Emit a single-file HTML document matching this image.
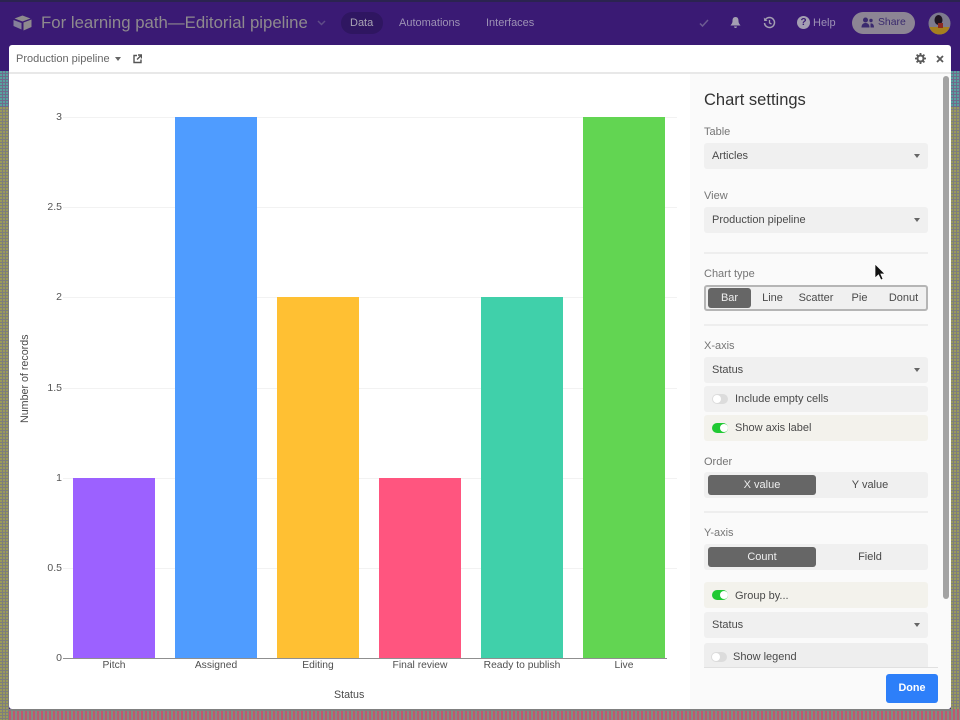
<!DOCTYPE html>
<html><head><meta charset="utf-8">
<style>
html,body{margin:0;padding:0;width:960px;height:720px;overflow:hidden;background:#3a1a74}
body{position:relative;font-family:"Liberation Sans",sans-serif;color:#4a4a4a}
.a{position:absolute}
.t{position:absolute;white-space:nowrap;line-height:14px}
.dith{background-color:#7d7d7d;background-image:radial-gradient(circle at 1px 1px,#a3a34e 0.9px,transparent 1px);background-size:3px 3px}
.box{position:absolute;left:704px;width:224px;height:26px;background:#f0f0f0;border-radius:3px}
.lab{position:absolute;left:704px;font-size:11px;color:#757575;line-height:14px;white-space:nowrap}
.val{position:absolute;left:8px;top:6px;font-size:11px;color:#4a4a4a;line-height:14px;white-space:nowrap}
.car{position:absolute;left:210px;top:11px;width:0;height:0;border-left:3px solid transparent;border-right:3px solid transparent;border-top:4px solid #666}
.sep{position:absolute;left:704px;width:224px;height:2px;background:#eeeeee}
.sw{position:absolute;left:8px;top:8px;width:16px;height:10px;border-radius:5px;background:#dcdcdc}
.sw i{position:absolute;left:1px;top:1px;width:8px;height:8px;border-radius:50%;background:#fff}
.sw.on{background:#20c933}.sw.on i{left:8px}
.sel{position:absolute;background:#666;border-radius:3px;color:#eee;font-size:11px;text-align:center;height:20px;line-height:20px;top:3px}
.opt{position:absolute;font-size:11px;color:#4a4a4a;text-align:center;line-height:20px;height:20px;top:3px}
.y{position:absolute;font-size:10.5px;color:#555;right:898px;line-height:12px}
.g{position:absolute;left:63px;width:614px;height:1px;background:#f2f2f2}
.x{position:absolute;top:659px;font-size:10.3px;color:#4f4f4f;text-align:center;line-height:14px;white-space:nowrap}
.b{position:absolute;width:82px}
.h{position:absolute;font-size:11px;color:#9d92b5;line-height:14px;white-space:nowrap}
</style></head><body>

<!-- header -->
<div class="a" style="left:0;top:0;width:960px;height:2px;background:#2b2350"></div>
<svg class="a" style="left:13px;top:15px" width="19" height="16" viewBox="0 0 19 16"><path d="M9.500 0.500L17.500 3.500L9.500 6.500L1.500 3.500Z" fill="#8e8a8e"/><path d="M10.500 7.500L18.500 4.500V12L10.500 15.500Z" fill="#8e8a8e"/><path d="M0.500 5L8.500 8V14.500L0.500 11Z" fill="#85809a"/></svg>
<div class="t" style="left:41px;top:13px;font-size:16.8px;line-height:20px;color:#8e8a8e">For learning path—Editorial pipeline</div>
<svg class="a" style="left:317px;top:20px" width="9" height="6" viewBox="0 0 9 6"><path d="M1 1L4.500 4.500L8 1" fill="none" stroke="#5f4c87" stroke-width="1.500"/></svg>
<div class="a" style="left:341px;top:12px;width:42px;height:22px;border-radius:11px;background:#2f1661"></div>
<div class="h" style="left:350px;top:16px;color:#a8a4b4">Data</div>
<div class="h" style="left:399px;top:16px">Automations</div>
<div class="h" style="left:486px;top:16px">Interfaces</div>
<svg class="a" style="left:699px;top:18px" width="10" height="10" viewBox="0 0 10 10"><path d="M1 5.500L3.500 8L9 2" fill="none" stroke="#6d5c92" stroke-width="1.500"/></svg>
<svg class="a" style="left:729px;top:16px" width="13" height="13" viewBox="0 0 13 13"><path d="M6.500 1C4 1 3.500 3 3.500 5C3.500 7.500 2 8.500 1.500 9.500H11.500C11 8.500 9.500 7.500 9.500 5C9.500 3 9 1 6.500 1ZM5 10.500H8C8 12.500 5 12.500 5 10.500Z" fill="#a49fb2"/></svg>
<svg class="a" style="left:763px;top:16px" width="13" height="13" viewBox="0 0 13 13"><path d="M2.500 3.500A5 5 0 1 1 1.500 7" fill="none" stroke="#a49fb2" stroke-width="1.500"/><path d="M0.800 1.500L1.200 5H4.500Z" fill="#a49fb2"/><path d="M6.500 4V7L8.500 8" fill="none" stroke="#a49fb2" stroke-width="1.300"/></svg>
<div class="a" style="left:797px;top:16px;width:13px;height:13px;border-radius:50%;background:#a49fb2;color:#3a1a74;font-size:10px;font-weight:bold;line-height:13px;text-align:center">?</div>
<div class="h" style="left:813px;top:16px;font-size:11px">Help</div>
<div class="a" style="left:852px;top:12px;width:63px;height:22px;border-radius:11px;background:#8c8594"></div>
<svg class="a" style="left:861px;top:17px" width="13" height="11" viewBox="0 0 13 11"><circle cx="4.500" cy="3" r="2.500" fill="#3a2a6e"/><path d="M0.500 10.500C0.500 7 2.500 6 4.500 6C6.500 6 8.500 7 8.500 10.500Z" fill="#3a2a6e"/><circle cx="10" cy="3.500" r="1.700" fill="#3a2a6e"/><path d="M9.500 10.500H13C13 7.500 11.500 6 9.500 6.500Z" fill="#3a2a6e"/></svg>
<div class="h" style="left:878px;top:16px;font-size:10.4px;color:#3a2a6e">Share</div>
<svg class="a" style="left:928px;top:12px" width="23" height="23" viewBox="0 0 23 23"><circle cx="11.500" cy="11.500" r="11" fill="#7d7a8e"/><path d="M1.500 15H21.500C20 20 16 22.500 11.500 22.500C7 22.500 3 20 1.500 15Z" fill="#a5801f"/><ellipse cx="10.500" cy="8" rx="4" ry="5" fill="#1e1420"/><path d="M10 11H15V16H10Z" fill="#8b2a22"/></svg>

<!-- dithered side strips -->
<div class="a" style="left:0;top:71px;width:9px;height:36px;background-color:#6f6a8c;background-image:radial-gradient(circle at 1px 1px,#4fb5a5 0.9px,transparent 1px);background-size:3px 3px"></div>
<div class="a dith" style="left:0;top:107px;width:9px;height:613px"></div>
<div class="a" style="left:951px;top:71px;width:9px;height:36px;background-color:#6f6a8c;background-image:radial-gradient(circle at 1px 1px,#4fb5a5 0.9px,transparent 1px);background-size:3px 3px"></div>
<div class="a dith" style="left:951px;top:107px;width:9px;height:613px"></div>
<div class="a" style="left:9px;top:709px;width:951px;height:11px;background:repeating-linear-gradient(90deg,#c2566e 0,#c2566e 2px,#7f8f85 2px,#7f8f85 4px)"></div>
<div class="a" style="left:9px;top:709px;width:942px;height:2px;background:#808080"></div>

<!-- modal -->
<div class="a" style="left:9px;top:45px;width:942px;height:664px;background:#fff;border-radius:3px;overflow:hidden">
  <div class="a" style="left:0;top:27px;width:942px;height:2px;background:#e8e8e8"></div>
  <div class="a" style="left:681px;top:29px;width:261px;height:635px;background:#fafafa"></div>
  <div class="a" style="left:934px;top:31px;width:6px;height:523px;border-radius:3px;background:#a3a3a3"></div>
</div>
<div class="t" style="left:16px;top:52px;font-size:11px;color:#666">Production pipeline</div>
<div class="a" style="left:115px;top:57px;border-left:3px solid transparent;border-right:3px solid transparent;border-top:4px solid #666"></div>
<svg class="a" style="left:133px;top:54px" width="9" height="10" viewBox="0 0 9 10"><path d="M4 1.500H1V8.500H8V5.500M5 1H8.500V4.500M8 1.500L4 5.500" fill="none" stroke="#555" stroke-width="1.400"/></svg>
<svg class="a" style="left:915px;top:53px" width="11" height="11" viewBox="0 0 11 11"><circle cx="5.500" cy="5.500" r="3" fill="none" stroke="#5a5a5a" stroke-width="2"/><path d="M5.500 0V2M5.500 9V11M0 5.500H2M9 5.500H11M1.600 1.600L3 3M8 8L9.400 9.400M9.400 1.600L8 3M3 8L1.600 9.400" stroke="#5a5a5a" stroke-width="1.800"/></svg>
<svg class="a" style="left:936px;top:55px" width="8" height="8" viewBox="0 0 8 8"><path d="M1 1L7 7M7 1L1 7" stroke="#5a5a5a" stroke-width="1.800"/></svg>

<!-- chart -->
<div class="g" style="top:117px"></div>
<div class="g" style="top:207px"></div>
<div class="g" style="top:297px"></div>
<div class="g" style="top:388px"></div>
<div class="g" style="top:478px"></div>
<div class="g" style="top:568px"></div>
<div class="a" style="left:63px;top:658px;width:604px;height:1px;background:#8f8f8f"></div>
<div class="y" style="top:111px">3</div>
<div class="y" style="top:201px">2.5</div>
<div class="y" style="top:291px">2</div>
<div class="y" style="top:382px">1.5</div>
<div class="y" style="top:472px">1</div>
<div class="y" style="top:562px">0.5</div>
<div class="y" style="top:652px">0</div>
<div class="b" style="left:73px;top:478px;height:180px;background:#9c61ff"></div>
<div class="b" style="left:175px;top:117px;height:541px;background:#4f9cff"></div>
<div class="b" style="left:277px;top:297px;height:361px;background:#ffc033"></div>
<div class="b" style="left:379px;top:478px;height:180px;background:#ff557f"></div>
<div class="b" style="left:481px;top:297px;height:361px;background:#40d0aa"></div>
<div class="b" style="left:583px;top:117px;height:541px;background:#62d552"></div>
<div class="x" style="left:64px;width:100px">Pitch</div>
<div class="x" style="left:166px;width:100px">Assigned</div>
<div class="x" style="left:268px;width:100px">Editing</div>
<div class="x" style="left:370px;width:100px">Final review</div>
<div class="x" style="left:472px;width:100px">Ready to publish</div>
<div class="x" style="left:574px;width:100px">Live</div>
<div class="t" style="left:334px;top:688px;font-size:10.7px;color:#4a4a4a">Status</div>
<div class="t" style="left:-16px;top:370px;width:80px;text-align:center;font-size:10.7px;color:#4a4a4a;transform:rotate(-90deg);margin-top:6px;margin-left:1px">Number of records</div>

<!-- settings -->
<div class="t" style="left:704px;top:90px;font-size:16.5px;line-height:20px;color:#333">Chart settings</div>
<div class="lab" style="top:125px">Table</div>
<div class="box" style="top:143px"><div class="val">Articles</div><div class="car"></div></div>
<div class="lab" style="top:189px">View</div>
<div class="box" style="top:207px"><div class="val">Production pipeline</div><div class="car"></div></div>
<div class="sep" style="top:252px"></div>
<div class="lab" style="top:267px">Chart type</div>
<div class="box" style="top:285px;box-shadow:inset 0 0 0 2px #b5b5b5">
  <div class="sel" style="left:4px;width:43px;top:3px">Bar</div>
  <div class="opt" style="left:47px;width:43px">Line</div>
  <div class="opt" style="left:90px;width:44px">Scatter</div>
  <div class="opt" style="left:134px;width:43px">Pie</div>
  <div class="opt" style="left:177px;width:45px">Donut</div>
</div>
<div class="sep" style="top:324px"></div>
<div class="lab" style="top:339px">X-axis</div>
<div class="box" style="top:357px"><div class="val">Status</div><div class="car"></div></div>
<div class="box" style="top:386px"><div class="sw"><i></i></div><div class="val" style="left:31px">Include empty cells</div></div>
<div class="box" style="top:415px;background:#f3f2ec"><div class="sw on"><i></i></div><div class="val" style="left:31px">Show axis label</div></div>
<div class="lab" style="top:455px">Order</div>
<div class="box" style="top:472px">
  <div class="sel" style="left:4px;width:108px">X value</div>
  <div class="opt" style="left:112px;width:108px">Y value</div>
</div>
<div class="sep" style="top:511px"></div>
<div class="lab" style="top:526px">Y-axis</div>
<div class="box" style="top:544px">
  <div class="sel" style="left:4px;width:108px">Count</div>
  <div class="opt" style="left:112px;width:108px">Field</div>
</div>
<div class="box" style="top:582px;background:#f3f2ec"><div class="sw on"><i></i></div><div class="val" style="left:31px;top:7px">Group by...</div></div>
<div class="box" style="top:612px"><div class="val">Status</div><div class="car"></div></div>
<div class="box" style="top:643px;height:24px;background:#eee;border-radius:3px 3px 0 0"><div class="sw" style="left:7px;top:9px"><i></i></div><div class="val" style="left:29px;top:7px">Show legend</div></div>
<div class="a" style="left:704px;top:667px;width:234px;height:1px;background:#e0e0e0"></div>
<div class="a" style="left:886px;top:674px;width:52px;height:29px;background:#2d7ff9;border-radius:3px;color:#fff;font-size:10.8px;font-weight:bold;text-align:center;line-height:29px">Done</div>

<!-- cursor -->
<svg class="a" style="left:874px;top:263px" width="12" height="19" viewBox="0 0 12 19"><path d="M1 1V15L4.500 11.800L7 17L9 16L6.800 11H11Z" fill="#111" stroke="#fff" stroke-width="0.700"/></svg>
</body></html>
